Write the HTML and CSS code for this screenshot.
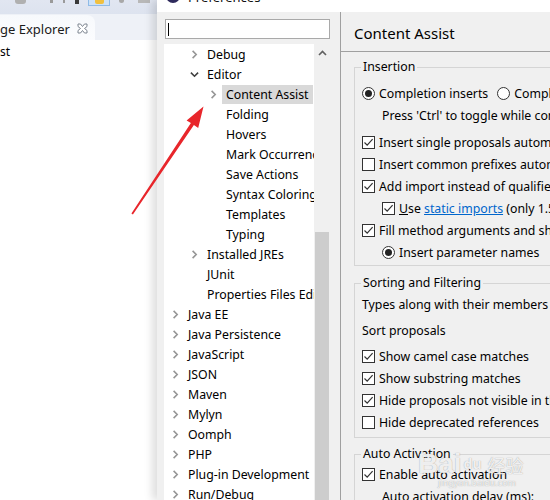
FILE: index.html
```html
<!DOCTYPE html>
<html>
<head>
<meta charset="utf-8">
<link rel="stylesheet" href="styles.css">
</head>
<body>
<div class="screen">
  <aside class="explorer">
    <div class="toolbar">
      <span class="tb tb-a"></span>
      <span class="tb tb-b"></span>
      <span class="tb tb-c"></span>
      <span class="tb tb-d"></span>
      <span class="tb tb-sel"><span class="tb-yellow"></span></span>
      <span class="tb tb-e"></span>
      <span class="tb tb-f"></span>
    </div>
    <div class="tabrow">
      <div class="tab">
        <span class="tab-title">ge Explorer</span>
        <svg class="tab-close" width="11" height="11" viewBox="0 0 11 11"><path d="M1 1h2.5L5.5 3.5 7.5 1H10v2.5L7.5 5.5 10 7.5V10H7.5L5.5 7.5 3.5 10H1V7.5L3.5 5.5 1 3.5z" fill="#fff" stroke="#7d8590" stroke-width="1"/></svg>
      </div>
    </div>
    <div class="explorer-body">
      <div class="exp-item">st</div>
    </div>
  </aside>

  <section class="dialog">
    <div class="titlebar">
      <span class="app-icon"></span>
      <span class="title">Preferences</span>
    </div>
    <div class="dialog-body">
      <nav class="nav">
        <div class="filter"><span class="caret"></span></div>
        <div class="tree-wrap">
          <ul class="tree">
            <li class="node l1"><span class="chev right"></span><span class="label">Debug</span></li>
            <li class="node l1"><span class="chev down"></span><span class="label">Editor</span></li>
            <li class="node l2"><span class="chev right"></span><span class="label selected">Content Assist</span></li>
            <li class="node l2"><span class="chev"></span><span class="label">Folding</span></li>
            <li class="node l2"><span class="chev"></span><span class="label">Hovers</span></li>
            <li class="node l2"><span class="chev"></span><span class="label">Mark Occurrences</span></li>
            <li class="node l2"><span class="chev"></span><span class="label">Save Actions</span></li>
            <li class="node l2"><span class="chev"></span><span class="label">Syntax Coloring</span></li>
            <li class="node l2"><span class="chev"></span><span class="label">Templates</span></li>
            <li class="node l2"><span class="chev"></span><span class="label">Typing</span></li>
            <li class="node l1"><span class="chev right"></span><span class="label">Installed JREs</span></li>
            <li class="node l1"><span class="chev"></span><span class="label">JUnit</span></li>
            <li class="node l1"><span class="chev"></span><span class="label">Properties Files Editor</span></li>
            <li class="node l0"><span class="chev right"></span><span class="label">Java EE</span></li>
            <li class="node l0"><span class="chev right"></span><span class="label">Java Persistence</span></li>
            <li class="node l0"><span class="chev right"></span><span class="label">JavaScript</span></li>
            <li class="node l0"><span class="chev right"></span><span class="label">JSON</span></li>
            <li class="node l0"><span class="chev right"></span><span class="label">Maven</span></li>
            <li class="node l0"><span class="chev right"></span><span class="label">Mylyn</span></li>
            <li class="node l0"><span class="chev right"></span><span class="label">Oomph</span></li>
            <li class="node l0"><span class="chev right"></span><span class="label">PHP</span></li>
            <li class="node l0"><span class="chev right"></span><span class="label">Plug-in Development</span></li>
            <li class="node l0"><span class="chev right"></span><span class="label">Run/Debug</span></li>
          </ul>
          <div class="vscroll">
            <div class="vs-up"><svg width="9" height="6" viewBox="0 0 9 6"><path d="M1 5L4.5 1.5 8 5" fill="none" stroke="#606060" stroke-width="1.6"/></svg></div>
            <div class="vs-thumb"></div>
          </div>
        </div>
      </nav>
      <div class="sash"></div>
      <main class="page">
        <h1 class="page-title">Content Assist</h1>
        <div class="page-body">
          <fieldset class="group g-insertion">
            <legend>Insertion</legend>
            <div class="row first">
              <span class="radio on"></span><span class="txt">Completion inserts</span>
              <span class="radio second"></span><span class="txt">Completion overwrites</span>
            </div>
            <div class="row indent-text">Press 'Ctrl' to toggle while content assist is active</div>
            <div class="row gap"><span class="check on"></span><span class="txt">Insert single proposals automatically</span></div>
            <div class="row"><span class="check"></span><span class="txt">Insert common prefixes automatically</span></div>
            <div class="row"><span class="check on"></span><span class="txt">Add import instead of qualified name</span></div>
            <div class="row indent"><span class="check on"></span><span class="txt"><u>U</u>se <a class="link">static imports</a> (only 1.5 or higher)</span></div>
            <div class="row"><span class="check on"></span><span class="txt">Fill method arguments and show guessed arguments</span></div>
            <div class="row indent"><span class="radio on"></span><span class="txt">Insert parameter names</span></div>
          </fieldset>

          <fieldset class="group g-sorting">
            <legend>Sorting and Filtering</legend>
            <div class="row plain first">Types along with their members</div>
            <div class="row plain spaced">Sort proposals</div>
            <div class="row spaced"><span class="check on"></span><span class="txt">Show camel case matches</span></div>
            <div class="row"><span class="check on"></span><span class="txt">Show substring matches</span></div>
            <div class="row"><span class="check on"></span><span class="txt">Hide proposals not visible in the invocation context</span></div>
            <div class="row"><span class="check"></span><span class="txt">Hide deprecated references</span></div>
          </fieldset>

          <fieldset class="group g-auto">
            <legend>Auto Activation</legend>
            <div class="row first"><span class="check on"></span><span class="txt">Enable auto activation</span></div>
            <div class="row indent-text">Auto activation delay (ms):</div>
          </fieldset>
        </div>
      </main>
    </div>
  </section>

  <svg class="annotation" width="550" height="500" viewBox="0 0 550 500">
    <polygon points="131.4,213.6 132.9,214.6 193.9,125.1 198.2,128.0 203.5,106.5 186.6,120.4 190.9,123.1" fill="#e8262b"/>
  </svg>

  <div class="watermark">
    <span class="wm-bai">Bai</span><span class="wm-paw">du</span><span class="wm-cn">经验</span>
    <span class="wm-url">jingyan.baidu.com</span>
  </div>
</div>
</body>
</html>
```
FILE: styles.css
```css
* { box-sizing: border-box; margin: 0; padding: 0; }
html, body { width: 550px; height: 500px; overflow: hidden; }
body {
  font-family: "Noto Sans", "Open Sans", sans-serif;
  font-size: 12.3px;
  color: #000;
  background: #fff;
}
.screen {
  position: relative;
  display: flex;
  width: 550px;
  height: 500px;
  overflow: hidden;
}

/* ---------- Package explorer (left) ---------- */
.explorer {
  width: 157px;
  flex: none;
  display: flex;
  flex-direction: column;
  background: #fff;
}
.toolbar {
  height: 14px;
  background: linear-gradient(#e1e6f1, #dde3ef);
  display: flex;
  align-items: flex-start;
}
.tb { display: block; flex: none; }
.tb-a { width: 11px; height: 4px; margin-left: 15px; background: #b0b0b0; border-radius: 0 0 3px 3px; }
.tb-b { width: 3px; height: 3px; margin-left: 24px; background: #9a9a9a; }
.tb-c { width: 2px; height: 3px; margin-left: 10px; background: #9a9a9a; }
.tb-d { width: 4px; height: 4px; margin-left: 10px; background: #3a3a3a; }
.tb-sel {
  width: 22px; height: 6px; margin-left: 9px;
  background: #cde2f8; border: 1px solid #8fbbe7; border-top: 0;
  display: flex; justify-content: center;
}
.tb-yellow { width: 9px; height: 4px; background: #f0c040; border-radius: 0 0 2px 2px; }
.tb-e { width: 5px; height: 3px; margin-left: 9px; background: #a8a8a8; border-radius: 0 0 3px 3px; }
.tb-f { width: 12px; height: 3px; margin-left: 14px; background: #b8b8b8; }

.tabrow {
  height: 26px;
  background: #eef1f7;
  display: flex;
  align-items: flex-end;
}
.tab {
  width: 95px;
  height: 25px;
  background: linear-gradient(#f7f9fc, #fbfcfe);
  border-top-right-radius: 8px;
  display: flex;
  align-items: center;
  padding-top: 2px;
}
.tab-title {
  font-size: 13px;
  color: #1a1a1a;
  line-height: 16px;
  white-space: nowrap;
}
.tab-close { margin-left: 7px; flex: none; }
.explorer-body { flex: 1; padding-top: 2px; }
.exp-item { height: 20px; line-height: 20px; font-size: 12px; }

/* ---------- Dialog ---------- */
.dialog {
  flex: 1;
  display: flex;
  flex-direction: column;
  background: #f0f0f0;
  position: relative;
  z-index: 1;
  box-shadow: -5px 0 8px rgba(0, 0, 0, 0.13);
}
.titlebar {
  height: 12px;
  background: #fff;
  display: flex;
  align-items: flex-end;
  overflow: hidden;
}
.app-icon {
  width: 14px; height: 14px;
  margin-left: 9px;
  margin-bottom: 9px;
  border-radius: 50%;
  background: #2e2a5c;
  flex: none;
}
.title {
  margin-left: 8px;
  margin-bottom: 8px;
  font-size: 13px;
  line-height: 14px;
  color: #111;
}
.dialog-body {
  flex: 1;
  display: flex;
  min-height: 0;
}
.nav {
  width: 183px;
  flex: none;
  display: flex;
  flex-direction: column;
}
.filter {
  width: 165px;
  height: 20px;
  margin: 7px 0 0 8px;
  background: #fff;
  border: 1px solid #a9a9a9;
  padding: 3px 0 0 2px;
}
.caret { display: block; width: 1px; height: 13px; background: #000; }
.tree-wrap {
  margin: 5px 0 0 7px;
  width: 166px;
  flex: 1;
  display: flex;
  min-height: 0;
}
.tree {
  list-style: none;
  width: 150px;
  flex: none;
  background: #fff;
  overflow: hidden;
}
.node {
  height: 20px;
  display: flex;
  align-items: center;
  white-space: nowrap;
}
.node.l0 { padding-left: 7px; }
.node.l1 { padding-left: 26px; }
.node.l2 { padding-left: 45px; }
.chev {
  width: 9px; height: 9px;
  margin-right: 8px;
  flex: none;
  background-repeat: no-repeat;
  background-position: center;
}
.chev.right {
  background-image: url("data:image/svg+xml,%3Csvg xmlns='http://www.w3.org/2000/svg' width='9' height='9'%3E%3Cpath d='M2.6 0.9L6.2 4.5 2.6 8.1' fill='none' stroke='%23969696' stroke-width='1.6'/%3E%3C/svg%3E");
}
.chev.down {
  background-image: url("data:image/svg+xml,%3Csvg xmlns='http://www.w3.org/2000/svg' width='9' height='9'%3E%3Cpath d='M0.9 2.6L4.5 6.2 8.1 2.6' fill='none' stroke='%23404040' stroke-width='1.6'/%3E%3C/svg%3E");
}
.label {
  line-height: 19px;
  padding: 0 4px;
  margin-left: -4px;
}
.label.selected { background: #d9d9d9; }
.vscroll {
  width: 16px;
  flex: none;
  background: #f0f0f0;
  display: flex;
  flex-direction: column;
}
.vs-up {
  height: 17px;
  display: flex;
  align-items: center;
  justify-content: center;
}
.vs-thumb {
  margin: 171px 1px 0 1px;
  flex: 1;
  background: #cdcdcd;
}
.sash {
  width: 1px;
  flex: none;
  background: #a0a0a0;
}

/* ---------- Preference page ---------- */
.page {
  flex: 1;
  min-width: 0;
  overflow: hidden;
}
.page-title {
  font-size: 15px;
  font-weight: normal;
  height: 40px;
  line-height: 34px;
  padding: 4px 0 0 13px;
  border-bottom: 1px solid #a0a0a0;
  white-space: nowrap;
}
.page-body {
  padding-left: 13px;
}
.group {
  width: 320px;
  border: 1px solid #d5d5d5;
  padding: 0;
}
.group legend {
  margin-left: 6px;
  padding: 0 2px;
  line-height: 16px;
  font-size: 12.3px;
  white-space: nowrap;
}
.g-insertion { margin-top: 7px; padding-bottom: 2px; }
.g-sorting { margin-top: 9px; padding-bottom: 4px; }
.g-auto { margin-top: 8px; }

.row {
  height: 22px;
  display: flex;
  align-items: center;
  padding-left: 7px;
  white-space: nowrap;
}
.g-insertion .row.first { margin-top: 7px; }
.g-insertion .row.gap { margin-top: 5px; }
.g-sorting .row.first { margin-top: 2px; }
.g-sorting .row.spaced { margin-top: 4px; }
.g-auto .row.first { margin-top: 1px; }
.row.indent { padding-left: 27px; }
.row.indent-text { padding-left: 27px; }
.row.plain { padding-left: 7px; }
.txt { margin-left: 4px; }
.link { color: #0066cc; text-decoration: underline; }

.check, .radio {
  width: 13px; height: 13px;
  flex: none;
  border: 1px solid #333;
  background: #fff;
  display: block;
}
.check.on {
  background: #fff url("data:image/svg+xml,%3Csvg xmlns='http://www.w3.org/2000/svg' width='11' height='11'%3E%3Cpath d='M1.5 5.5L4.2 8.2 9.6 2.2' fill='none' stroke='%23333' stroke-width='1.2'/%3E%3C/svg%3E") no-repeat center;
}
.radio {
  border-radius: 50%;
  display: flex;
  align-items: center;
  justify-content: center;
}
.radio.on::after {
  content: "";
  width: 7px; height: 7px;
  border-radius: 50%;
  background: #222;
}
.radio.second { margin-left: 9px; }

/* ---------- Overlays ---------- */
.annotation {
  position: absolute;
  left: 0; top: 0;
  z-index: 5;
  pointer-events: none;
}
.watermark {
  position: absolute;
  left: 418px;
  top: 448px;
  z-index: 4;
  width: 120px;
  pointer-events: none;
  color: rgba(255, 255, 255, 0.85);
  text-shadow: 0 0 1px rgba(110, 110, 110, 0.7);
  white-space: nowrap;
}
.wm-bai { font-size: 28px; font-weight: bold; font-family: "Liberation Sans", sans-serif; }
.wm-paw { font-size: 14px; font-weight: bold; margin-left: 2px; vertical-align: 4px; }
.wm-cn { font-size: 18px; margin-left: 6px; font-family: "Noto Sans CJK SC", sans-serif; }
.wm-url { display: block; font-size: 9px; margin: -4px 0 0 20px; }
```
